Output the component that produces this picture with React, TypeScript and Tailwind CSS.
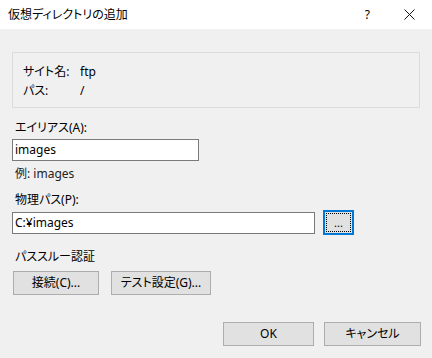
export default function App() {
  const btn =
    "h-[24px] bg-[#e1e1e1] border border-[#adadad] text-[12px] text-black flex items-center justify-center leading-4";

  return (
    <div
      className="w-[432px] h-[358px] bg-[#f0f0f0] text-black text-[12px] overflow-hidden [font-feature-settings:'palt']"
      style={{ fontFamily: '"Noto Sans", "Noto Sans CJK JP", sans-serif' }}
    >
      {/* Title bar */}
      <div className="h-[29px] bg-white flex items-center pl-2">
        <span className="text-[12px] leading-4">仮想ディレクトリの追加</span>
        <div className="ml-auto flex items-center">
          <span className="text-[12px] leading-4 mr-[34px]">?</span>
          <svg width="11" height="11" viewBox="0 0 11 11" className="mr-[17px]">
            <path d="M0.5 0.5 L10.5 10.5 M10.5 0.5 L0.5 10.5" stroke="#111" strokeWidth="1" />
          </svg>
        </div>
      </div>

      <div className="px-3">
        {/* Site info group */}
        <div className="mt-[23px] h-[56px] border border-[#dcdcdc] pl-[10px] pt-[9px]">
          <div className="flex leading-[19px]">
            <span className="w-[57px]">サイト名:</span>
            <span>ftp</span>
          </div>
          <div className="flex leading-[19px]">
            <span className="w-[57px]">パス:</span>
            <span>/</span>
          </div>
        </div>

        {/* Alias */}
        <div className="mt-[12px] pl-[3px] leading-4">エイリアス(A):</div>
        <div className="mt-[3px] w-[187px] h-[22px] bg-white border border-[#7a7a7a] flex items-center pl-[2px] leading-4">
          images
        </div>
        <div className="mt-[5px] pl-[3px] leading-4 text-[#222]">例: images</div>

        {/* Physical path */}
        <div className="mt-[10px] pl-[3px] leading-4">物理パス(P):</div>
        <div className="mt-[2px] flex items-center gap-[8px]">
          <div className="w-[303px] h-[22px] bg-white border border-[#7a7a7a] flex items-center pl-[2px] leading-4">
            C:¥images
          </div>
          <button className="w-[31px] h-[25px] bg-[#e1e1e1] border-2 border-[#0078d7] p-[1px]">
            <div className="w-full h-full border border-dotted border-black flex items-end justify-center pb-[2px] leading-3 text-[11px]">
              ...
            </div>
          </button>
        </div>

        {/* Pass-through auth */}
        <div className="mt-[14px] pl-[3px] leading-4">パススルー認証</div>
        <div className="mt-[6px] ml-[1px] flex gap-[12px]">
          <button className={`${btn} w-[86px]`}>接続(C)...</button>
          <button className={`${btn} w-[100px]`}>テスト設定(G)...</button>
        </div>

        {/* Dialog buttons */}
        <div className="mt-[27px] flex justify-end gap-[10px]">
          <button className={`${btn} w-[91px]`}>OK</button>
          <button className={`${btn} w-[97px] mr-[-1px]`}>キャンセル</button>
        </div>
      </div>
    </div>
  );
}
